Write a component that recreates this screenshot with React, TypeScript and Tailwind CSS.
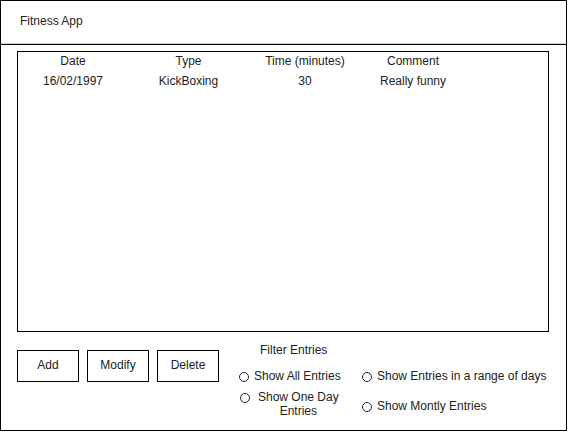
const rows = [
  { date: "16/02/1997", type: "KickBoxing", time: "30", comment: "Really funny" },
];

function Radio({ label }: { label: React.ReactNode }) {
  return (
    <label className="flex items-start gap-[5px]">
      <span className="mt-[3px] h-[10px] w-[10px] shrink-0 rounded-full border border-[#222] bg-white" />
      <span>{label}</span>
    </label>
  );
}

function Btn({ children }: { children: React.ReactNode }) {
  return (
    <button
      type="button"
      className="flex h-[32px] w-[62px] items-center justify-center border border-black bg-white pb-[2px]"
    >
      {children}
    </button>
  );
}

export default function App() {
  return (
    <div className="h-[432px] w-[570px] bg-white font-['Liberation_Sans',Arial,sans-serif] text-[12px] leading-[14px] text-[#222]">
      <div className="flex h-[431px] w-[567px] flex-col border border-black">
        <header className="flex h-[44px] shrink-0 items-center border-b border-black px-[19px] pb-[3px] shadow-[inset_0_-4px_0_-3px_#d0d0d0]">
          Fitness App
        </header>

        <div className="ml-[16px] mt-[6px] h-[281px] w-[532px] border border-black pt-[2px]">
          <div className="grid grid-cols-[110px_121px_112px_104px] text-center">
            <div className="h-[20px]">Date</div>
            <div className="h-[20px]">Type</div>
            <div className="h-[20px]">Time (minutes)</div>
            <div className="h-[20px]">Comment</div>
            {rows.map((r) => (
              <div key={r.date} className="contents">
                <div className="h-[20px]">{r.date}</div>
                <div className="h-[20px]">{r.type}</div>
                <div className="h-[20px]">{r.time}</div>
                <div className="h-[20px]">{r.comment}</div>
              </div>
            ))}
          </div>
        </div>

        <div className="ml-[16px] mt-[11px] flex">
          <div className="mt-[7px] flex gap-[8px]">
            <Btn>Add</Btn>
            <Btn>Modify</Btn>
            <Btn>Delete</Btn>
          </div>

          <div className="ml-[20px] grid grid-cols-[123px_auto]">
            <div className="pl-[21px]">Filter Entries</div>
            <div />
            <div className="mt-[12px]">
              <Radio label="Show All Entries" />
            </div>
            <div className="mt-[12px]">
              <Radio label="Show Entries in a range of days" />
            </div>
            <div className="mt-[7px] pl-[1px]">
              <label className="flex items-start gap-[8px]">
                <span className="mt-[3px] h-[10px] w-[10px] shrink-0 rounded-full border border-[#222] bg-white" />
                <span className="text-center">
                  Show One Day
                  <br />
                  Entries
                </span>
              </label>
            </div>
            <div className="mt-[16px]">
              <Radio label="Show Montly Entries" />
            </div>
          </div>
        </div>
      </div>
    </div>
  );
}
